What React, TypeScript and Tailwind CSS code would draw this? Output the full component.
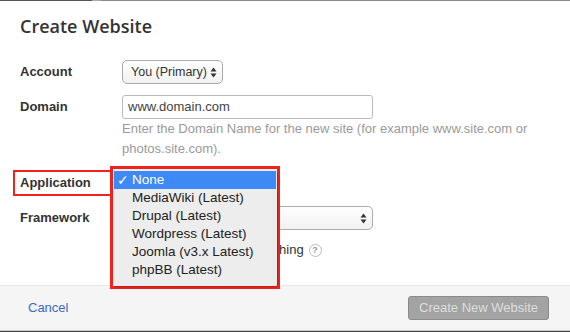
import React from "react";

function Arrows() {
  return (
    <svg width="7" height="11" viewBox="0 0 7 11" className="shrink-0">
      <path d="M3.5 0.5 L6.5 4.5 L0.5 4.5 Z" fill="#333" />
      <path d="M3.5 10.5 L6.5 6.5 L0.5 6.5 Z" fill="#333" />
    </svg>
  );
}

const items = [
  "MediaWiki (Latest)",
  "Drupal (Latest)",
  "Wordpress (Latest)",
  "Joomla (v3.x Latest)",
  "phpBB (Latest)",
];

export default function App() {
  return (
    <div
      className="w-[570px] h-[332px] bg-white flex flex-col overflow-hidden text-[#333]"
      style={{ fontFamily: '"Liberation Sans", Arial, sans-serif' }}
    >
      <div className="flex h-px shrink-0">
        <div className="w-[92px] bg-[#555]" />
        <div className="w-[9px] bg-[#aaa]" />
        <div className="flex-1 bg-[#8a8a8a]" />
      </div>

      <div className="pt-[13px] px-5">
        <h1
          className="text-[18px] leading-[24px] font-semibold text-[#333]"
          style={{ fontFamily: '"Open Sans", sans-serif' }}
        >
          Create Website
        </h1>
      </div>

      <div className="px-5 pt-[22px] text-[13px]">
        <div className="flex items-center h-[24px]">
          <div className="w-[102px] shrink-0 font-bold">Account</div>
          <div className="h-[24px] w-[101px] shrink-0 flex items-center justify-between pl-[8px] pr-[5px] border border-[#aaa] rounded-[5px] bg-gradient-to-b from-white to-[#f1f1f1] whitespace-nowrap text-[12.5px]">
            <span>You (Primary)</span>
            <Arrows />
          </div>
        </div>

        <div className="flex mt-[11px]">
          <div className="w-[102px] shrink-0 font-bold leading-[24px]">Domain</div>
          <div className="flex flex-col">
            <div className="h-[24px] w-[251px] flex items-center px-[5px] border border-[#bbb] rounded-[3px] text-[#444]">
              www.domain.com
            </div>
            <div className="text-[#9a9a9a] leading-[20px] w-[425px]">
              Enter the Domain Name for the new site (for example www.site.com or
              photos.site.com).
            </div>
          </div>
        </div>

        <div className="relative flex items-center h-[24px] mt-[12px]">
          <div className="relative w-[102px] shrink-0 font-bold">
            Application
            <div className="absolute left-[-7px] top-[-3px] w-[99px] h-[26px] border-[2.5px] border-[#f2231c]" />
          </div>
          <div className="h-[24px] w-[150px] border border-[#aaa] rounded-[5px]" />

          <div className="absolute left-[90px] top-[-5px] w-[170px] h-[123px] border-[3px] border-[#f2231c] z-10 bg-white">
            <div className="w-full h-full bg-[#ededed] rounded-[4px] shadow-[1px_1px_2px_rgba(0,0,0,0.25)] pt-[2px] px-px text-[13.5px]">
              <div className="h-[18px] bg-[#3d8af5] text-white flex items-center">
                <span className="w-[18px] text-center text-[14px] leading-none">✓</span>
                <span>None</span>
              </div>
              {items.map((t) => (
                <div key={t} className="h-[18px] flex items-center text-[#222]">
                  <span className="w-[18px]" />
                  <span>{t}</span>
                </div>
              ))}
            </div>
          </div>
        </div>

        <div className="flex items-center h-[24px] mt-[11px]">
          <div className="w-[102px] shrink-0 font-bold">Framework</div>
          <div className="h-[24px] w-[251px] flex items-center justify-end pr-[5px] border border-[#aaa] rounded-[5px] bg-gradient-to-b from-white to-[#f1f1f1]">
            <Arrows />
          </div>
        </div>

        <div className="flex items-center h-[20px] mt-[10px]">
          <div className="w-[102px] shrink-0" />
          <div className="w-[13px] h-[13px] border border-[#aaa] rounded-[3px]" />
          <span className="ml-[6px] whitespace-nowrap">Enable automatic publishing</span>
          <span className="ml-[5px] w-[13px] h-[13px] rounded-full border border-[#bbb] text-[#999] text-[9px] font-bold flex items-center justify-center leading-none">
            ?
          </span>
        </div>
      </div>

      <div className="flex-1" />

      <div className="h-[45px] shrink-0 bg-[#f5f5f5] border-t border-[#e6e6e6] flex items-center justify-between pl-[28px] pr-[21px] text-[13px]">
        <span className="text-[#3b68c9]">Cancel</span>
        <div className="h-[24px] w-[141px] flex items-center justify-center bg-[#a3a3a3] border border-[#8a8a8a] rounded-[3px] text-[#dedede] text-[13px]">
          Create New Website
        </div>
      </div>
      <div className="h-px shrink-0 bg-[#c8c8c8]" />
      <div className="h-px shrink-0 bg-[#444]" />
    </div>
  );
}
